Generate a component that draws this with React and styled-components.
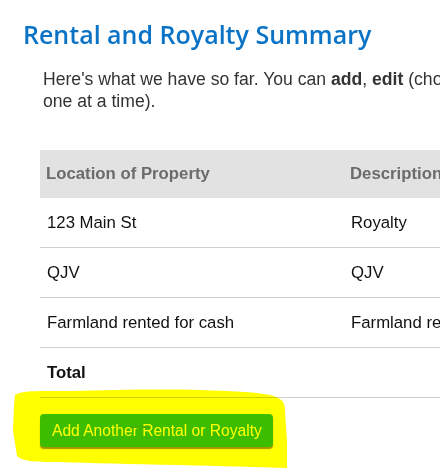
import React from "react";
import styled, { createGlobalStyle } from "styled-components";

const Global = createGlobalStyle`
  html, body { margin: 0; padding: 0; background: #fff; overflow: hidden; }
  body { width: 440px; height: 474px; font-family: "Liberation Sans", Arial, sans-serif; }
`;

const Page = styled.div`
  width: 440px;
  overflow: hidden;
`;

const Title = styled.h1`
  margin: 0;
  padding: 16px 0 0 23px;
  font-family: "Open Sans", "Noto Sans", sans-serif;
  font-weight: 600;
  font-size: 25px;
  line-height: 36px;
  color: #0b73c6;
  white-space: nowrap;
`;

const Intro = styled.p`
  margin: 16px 0 0 43px;
  font-size: 17.6px;
  line-height: 22px;
  color: #333;
`;

const Line = styled.span`
  display: block;
  white-space: nowrap;
`;

const Table = styled.table`
  margin: 38px 0 0 40px;
  border-collapse: collapse;
  width: 760px;
  font-size: 16.75px;
`;

const HeadCell = styled.th`
  background: #e2e2e2;
  color: #6b6b6b;
  font-weight: bold;
  text-align: left;
  padding: 15px 7px 15px 6px;
  line-height: 18px;
  width: ${(p) => p.$w || "auto"};
`;

const Cell = styled.td`
  padding: 15px 7px;
  line-height: 19px;
  color: #111;
  font-weight: ${(p) => (p.$bold ? "bold" : "normal")};
  border-bottom: 1px solid #cfcfcf;
`;

const ButtonArea = styled.div`
  position: relative;
  padding: 16px 0 0 40px;
  height: 61px;
`;

const Button = styled.button`
  display: inline-flex;
  align-items: center;
  height: 33px;
  padding: 0 11px 0 12px;
  border: none;
  border-radius: 4px;
  background: #3dbd12;
  color: #fff;
  font-family: "Liberation Sans", Arial, sans-serif;
  font-size: 15.6px;
  box-shadow: 0 2px 1px rgba(90, 60, 0, 0.55);
  position: relative;
`;

const Cursor = styled.span`
  position: absolute;
  left: 90px;
  top: 12px;
  width: 20px;
  height: 2px;
  background: #4ab0e8;
`;

const Highlight = styled.svg`
  position: absolute;
  left: 0;
  top: -12px;
  width: 300px;
  height: 89px;
  mix-blend-mode: multiply;
  pointer-events: none;
`;

const rows = [
  ["123 Main St", "Royalty"],
  ["QJV", "QJV"],
  ["Farmland rented for cash", "Farmland rented for cash"],
];

export default function App() {
  return (
    <Page>
      <Global />
      <Title>Rental and Royalty Summary</Title>
      <Intro>
        <Line>
          Here's what we have so far. You can <b>add</b>, <b>edit</b> (choose the item to change) or <b>delete</b> (choose
        </Line>
        <Line>one at a time).</Line>
      </Intro>
      <Table>
        <thead>
          <tr>
            <HeadCell $w="291px">Location of Property</HeadCell>
            <HeadCell $w="220px">Description</HeadCell>
            <HeadCell>Amount</HeadCell>
          </tr>
        </thead>
        <tbody>
          {rows.map((r, i) => (
            <tr key={i}>
              <Cell>{r[0]}</Cell>
              <Cell>{r[1]}</Cell>
              <Cell></Cell>
            </tr>
          ))}
          <tr>
            <Cell $bold>Total</Cell>
            <Cell></Cell>
            <Cell></Cell>
          </tr>
        </tbody>
      </Table>
      <ButtonArea>
        <Button>
          Add Another Rental or Royalty
          <Cursor />
        </Button>
        <Highlight viewBox="0 385 300 89">
          <path
            fill="#ffff00"
            d="M15,394 C22,389 40,390 70,390 C110,389 160,388 200,389 C230,390 255,391 270,394 C282,397 285,401 285,410 L287,440 L287,467 C260,466 220,465 180,464 C130,463 90,462 60,461 C40,461 22,461 17,455 L13,430 L14,405 Z"
          />
        </Highlight>
      </ButtonArea>
    </Page>
  );
}
